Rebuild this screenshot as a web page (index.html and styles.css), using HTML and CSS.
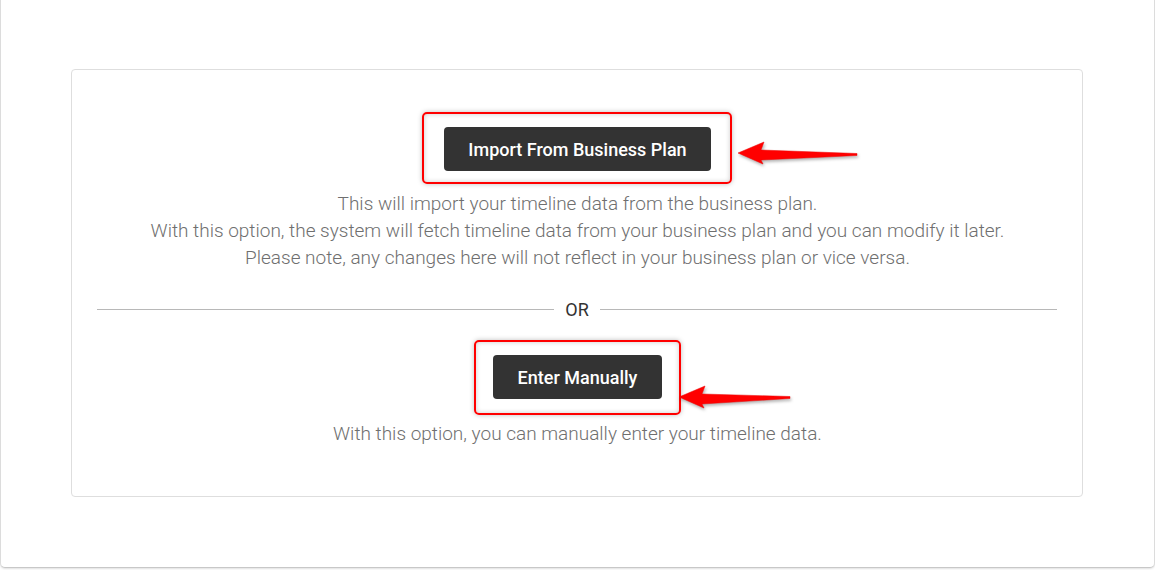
FILE: index.html
```html
<!DOCTYPE html>
<html>
<head>
<meta charset="utf-8">
<link rel="stylesheet" href="styles.css">
</head>
<body>
<div class="panel">
  <div class="card">
    <div class="option">
      <div class="btn-wrap">
        <button class="btn btn-import">Import From Business Plan</button>
        <span class="highlight hl-import"></span>
        <svg class="arrow arrow-import" width="124" height="30" viewBox="0 0 124 30">
          <path d="M1 13 L27 2 L24 10 L120 13.5 L120 15.5 L24 20 L26 24 Z" fill="#f00" stroke="#e00" stroke-width="0.5" stroke-linejoin="round"/>
        </svg>
      </div>
      <p class="desc">This will import your timeline data from the business plan.<br>With this option, the system will fetch timeline data from your business plan and you can modify it later.<br>Please note, any changes here will not reflect in your business plan or vice versa.</p>
    </div>
    <div class="divider"><span>OR</span></div>
    <div class="option">
      <div class="btn-wrap">
        <button class="btn btn-manual">Enter Manually</button>
        <span class="highlight hl-manual"></span>
        <svg class="arrow arrow-manual" width="116" height="30" viewBox="0 0 116 30">
          <path d="M1 13 L27 2 L24 10 L112 12.5 L112 14.5 L24 20 L26 24 Z" fill="#f00" stroke="#e00" stroke-width="0.5" stroke-linejoin="round"/>
        </svg>
      </div>
      <p class="desc">With this option, you can manually enter your timeline data.</p>
    </div>
  </div>
</div>
</body>
</html>
```
FILE: styles.css
```css
html, body {
  margin: 0;
  padding: 0;
  background: #ffffff;
}
body {
  font-family: Roboto, "Liberation Sans", sans-serif;
  width: 1155px;
  height: 570px;
  overflow: hidden;
}
.panel {
  box-sizing: border-box;
  width: 1155px;
  height: 569px;
  margin-top: -1px;
  padding: 69px 72px 0 70px;
  background: #fff;
  border: 1px solid #dcdcdc;
  border-bottom-color: #c8c8c8;
  border-radius: 0 0 5px 5px;
  box-shadow: 0 1px 2px rgba(0,0,0,0.12);
}
.card {
  box-sizing: border-box;
  width: 1012px;
  height: 428px;
  border: 1px solid #dedede;
  border-radius: 4px;
  padding: 57px 25px 0;
  display: flex;
  flex-direction: column;
  align-items: center;
}
.option {
  display: flex;
  flex-direction: column;
  align-items: center;
  margin-left: 1px;
}
.btn-wrap {
  position: relative;
  display: flex;
}
.btn {
  font-family: Roboto, "Liberation Sans", sans-serif;
  font-size: 18px;
  font-weight: 500;
  color: #fff;
  background: #333333;
  border: none;
  border-radius: 4px;
  height: 44px;
  padding: 0 20px;
  cursor: pointer;
}
.btn-import { width: 267px; }
.btn-manual { width: 169px; }
.highlight {
  position: absolute;
  border: 2px solid #f00;
  border-radius: 5px;
  box-shadow: 0 0 5px rgba(0,0,0,0.25), inset 0 0 5px rgba(0,0,0,0.2);
  pointer-events: none;
}
.hl-import {
  left: -22px;
  top: -15px;
  width: 306px;
  height: 68px;
}
.hl-manual {
  left: -19px;
  top: -15px;
  width: 203px;
  height: 71px;
}
.arrow {
  position: absolute;
  filter: drop-shadow(1px 2px 1.5px rgba(0,0,0,0.3));
}
.arrow-import {
  left: 293px;
  top: 13px;
}
.arrow-manual {
  left: 185px;
  top: 29px;
}
.desc {
  margin: 19px 0 0;
  font-size: 19px;
  font-weight: 300;
  line-height: 27px;
  color: #6f6f6f;
  text-align: center;
}
.divider {
  align-self: stretch;
  display: flex;
  align-items: center;
  gap: 11px;
  margin: 25px 0 32px;
  font-size: 18px;
  line-height: 27px;
  color: #333;
}
.divider::before,
.divider::after {
  content: "";
  flex: 1;
  height: 1px;
  background: #b8b8b8;
}
.option + .divider + .option .desc {
  margin-top: 21px;
}
```
